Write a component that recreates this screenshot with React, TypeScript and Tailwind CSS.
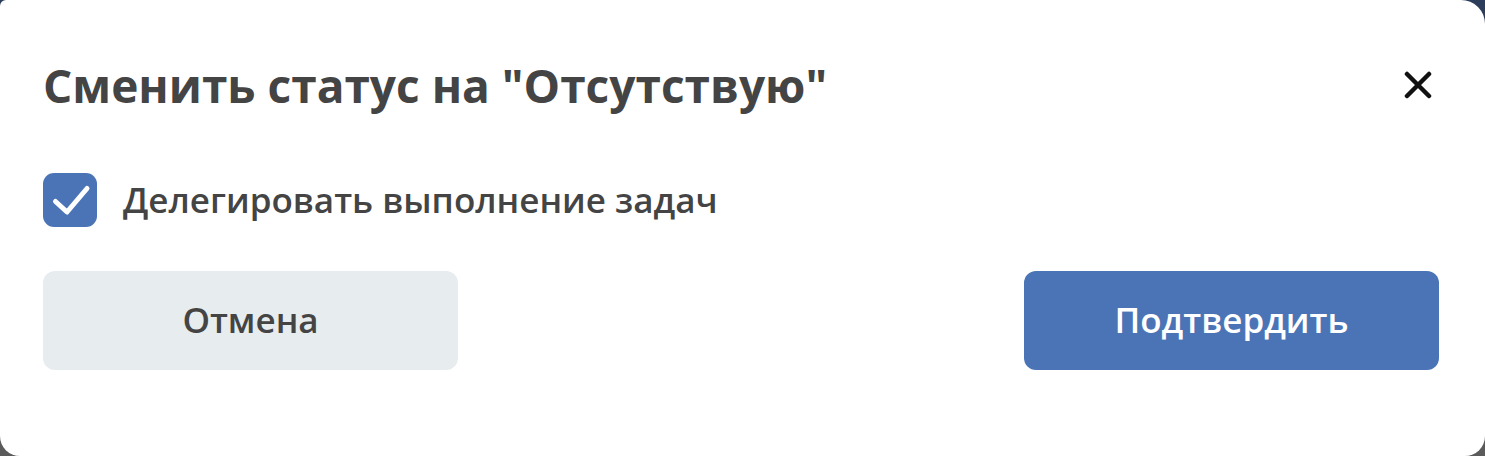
import React, { useState } from 'react';

const App: React.FC = () => {
  const [delegate, setDelegate] = useState(true);

  return (
    <div className="w-[1485px] h-[456px] bg-gradient-to-b from-[#2b3d5a] to-[#5b5b5b] font-['Open_Sans',sans-serif]">
      <div className="w-full h-full bg-white rounded-tl-[6px] rounded-tr-[24px] rounded-b-[20px] px-[43px] pt-[57px]">
        {/* заголовок */}
        <div className="flex items-center justify-between">
          <h1 className="text-[46px] leading-[56px] font-bold text-[#444444]">
            Сменить статус на "Отсутствую"
          </h1>
          <button className="mr-[10px] text-[#111111]" aria-label="Закрыть">
            <svg width="28" height="28" viewBox="0 0 28 28" fill="none">
              <path d="M3 3L25 25M25 3L3 25" stroke="currentColor" strokeWidth="4.5" strokeLinecap="round" />
            </svg>
          </button>
        </div>

        {/* чекбокс */}
        <label className="mt-[60px] flex items-center gap-[26px] cursor-pointer">
          <span
            onClick={() => setDelegate(!delegate)}
            className="w-[54px] h-[54px] rounded-[11px] bg-[#4b74b7] flex items-center justify-center"
          >
            {delegate && (
              <svg width="54" height="54" viewBox="0 0 54 54" fill="none">
                <path d="M12.5 28.5L24 39L44 15.5" stroke="white" strokeWidth="5" strokeLinecap="round" strokeLinejoin="round" />
              </svg>
            )}
          </span>
          <span className="text-[35px] font-semibold text-[#444444]">Делегировать выполнение задач</span>
        </label>

        {/* кнопки */}
        <div className="mt-[44px] flex justify-between">
          <button className="w-[415px] h-[99px] rounded-[12px] bg-[#e7ecef] text-[35px] font-semibold text-[#444444]">
            Отмена
          </button>
          <button className="mr-[3px] w-[415px] h-[99px] rounded-[12px] bg-[#4b74b7] text-[35px] font-semibold text-white">
            Подтвердить
          </button>
        </div>
      </div>
    </div>
  );
};

export default App;
